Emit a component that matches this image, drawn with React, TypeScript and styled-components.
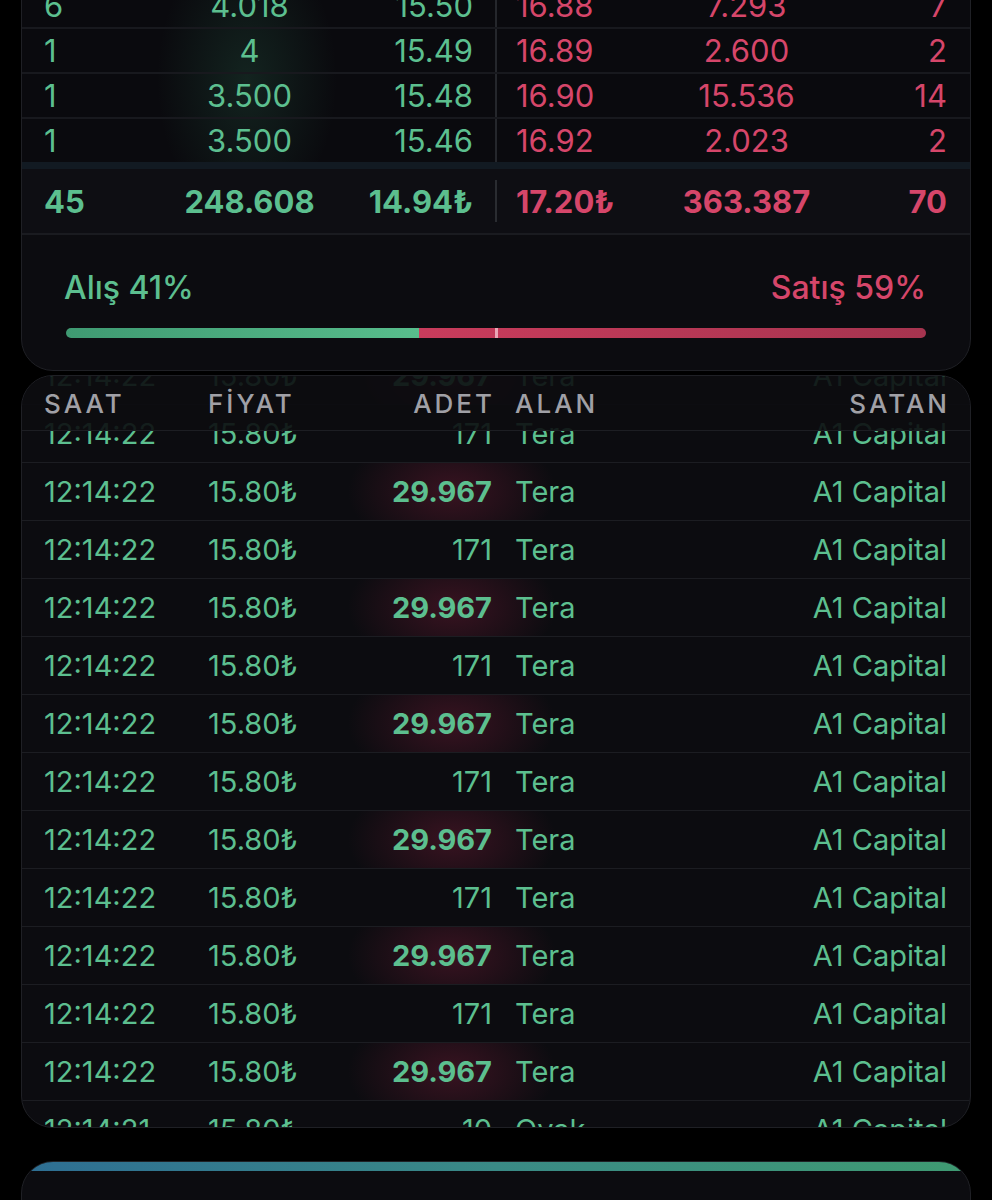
import React from 'react';
import styled, { createGlobalStyle } from 'styled-components';

const GREEN = '#5cbf8f';
const RED = '#d6466a';

const GlobalStyle = createGlobalStyle`
  html, body {
    margin: 0;
    padding: 0;
    background: #000;
  }
  body {
    font-family: 'Inter', 'Noto Sans', 'DejaVu Sans', sans-serif;
    -webkit-font-smoothing: antialiased;
  }
`;

interface BookLine {
  bidCount: string;
  bidQty: string;
  bidPrice: string;
  askPrice: string;
  askQty: string;
  askCount: string;
}

const bookLines: BookLine[] = [
  { bidCount: '6', bidQty: '4.018', bidPrice: '15.50', askPrice: '16.88', askQty: '7.293', askCount: '7' },
  { bidCount: '1', bidQty: '4', bidPrice: '15.49', askPrice: '16.89', askQty: '2.600', askCount: '2' },
  { bidCount: '1', bidQty: '3.500', bidPrice: '15.48', askPrice: '16.90', askQty: '15.536', askCount: '14' },
  { bidCount: '1', bidQty: '3.500', bidPrice: '15.46', askPrice: '16.92', askQty: '2.023', askCount: '2' },
];

interface Trade {
  time: string;
  price: string;
  qty: string;
  buyer: string;
  seller: string;
  big?: boolean;
}

const trades: Trade[] = [];
for (let i = 0; i < 13; i++) {
  const big = i % 2 === 0;
  trades.push({ time: '12:14:22', price: '15.80₺', qty: big ? '29.967' : '171', buyer: 'Tera', seller: 'A1 Capital', big });
}
trades.push({ time: '12:14:21', price: '15.80₺', qty: '10', buyer: 'Oyak', seller: 'A1 Capital' });

function App() {
  const buyPct = 41;

  return (
    <>
      <GlobalStyle />
      <Page>
        <BookCard>
          <BookBody>
            {bookLines.map((line, i) => (
              <BookRow key={i}>
                <BidSide>
                  <Cell $align="left">{line.bidCount}</Cell>
                  <Cell $align="center">{line.bidQty}</Cell>
                  <Cell $align="right">{line.bidPrice}</Cell>
                </BidSide>
                <Divider />
                <AskSide>
                  <Cell $align="left">{line.askPrice}</Cell>
                  <Cell $align="center">{line.askQty}</Cell>
                  <Cell $align="right">{line.askCount}</Cell>
                </AskSide>
              </BookRow>
            ))}
          </BookBody>
          <TotalsRow>
            <BidSide>
              <Cell $align="left" $bold>45</Cell>
              <Cell $align="center" $bold>248.608</Cell>
              <Cell $align="right" $bold>14.94₺</Cell>
            </BidSide>
            <ShortDivider />
            <AskSide>
              <Cell $align="left" $bold>17.20₺</Cell>
              <Cell $align="center" $bold>363.387</Cell>
              <Cell $align="right" $bold>70</Cell>
            </AskSide>
          </TotalsRow>
          <RatioBlock>
            <RatioLabels>
              <RatioLabel $color={GREEN}>Alış {buyPct}%</RatioLabel>
              <RatioLabel $color={RED}>Satış {100 - buyPct}%</RatioLabel>
            </RatioLabels>
            <RatioBar>
              <BuyPart style={{ width: `${buyPct}%` }} />
              <SellPart />
              <MidMarker />
            </RatioBar>
          </RatioBlock>
        </BookCard>

        <TradesCard>
          <TradesList>
            {trades.map((t, i) => (
              <TradeRow key={i} $big={t.big}>
                <TradeCell>{t.time}</TradeCell>
                <TradeCell>{t.price}</TradeCell>
                <TradeCell $right $bold={t.big}>{t.qty}</TradeCell>
                <TradeCell $pad>{t.buyer}</TradeCell>
                <TradeCell $right>{t.seller}</TradeCell>
              </TradeRow>
            ))}
          </TradesList>
          <TradesHeader>
            <HeadCell>SAAT</HeadCell>
            <HeadCell>FİYAT</HeadCell>
            <HeadCell $right>ADET</HeadCell>
            <HeadCell $pad>ALAN</HeadCell>
            <HeadCell $right>SATAN</HeadCell>
          </TradesHeader>
        </TradesCard>

        <NextCard>
          <GradientStrip />
        </NextCard>
      </Page>
    </>
  );
}

export default App;

const Page = styled.div`
  margin-top: -17px;
  padding: 0 21px;
  display: flex;
  flex-direction: column;
`;

const BookCard = styled.section`
  background: #0c0c10;
  border: 1px solid #1f2025;
  border-radius: 0 0 32px 32px;
  overflow: hidden;
`;

const BookBody = styled.div`
  background:
    radial-gradient(ellipse 120px 190px at 225px 95px, rgba(70, 180, 130, 0.15), transparent 75%),
    #0a0a0e;
`;

const BookRow = styled.div`
  height: 45px;
  box-sizing: border-box;
  border-bottom: 2px solid #18191e;
  display: grid;
  grid-template-columns: 1fr 2px 1fr;
  align-items: stretch;
  color: ${GREEN};
  &:last-child {
    border-bottom: 7px solid #121a22;
    height: 50px;
  }
`;

const BidSide = styled.div`
  display: grid;
  grid-template-columns: 110px 1fr 128px;
  align-items: center;
  padding: 0 22px 0 22px;
  color: ${GREEN};
`;

const AskSide = styled.div`
  display: grid;
  grid-template-columns: 135px 1fr 105px;
  align-items: center;
  padding: 0 23px 0 19px;
  color: ${RED};
`;

const Cell = styled.div<{ $align: 'left' | 'center' | 'right'; $bold?: boolean }>`
  text-align: ${({ $align }) => $align};
  font-size: 31px;
  font-weight: ${({ $bold }) => ($bold ? 700 : 400)};
  line-height: 1;
  white-space: nowrap;
`;

const Divider = styled.div`
  background: #25272c;
`;

const ShortDivider = styled.div`
  align-self: center;
  height: 42px;
  background: #2a2c31;
`;

const TotalsRow = styled.div`
  height: 66px;
  box-sizing: border-box;
  border-bottom: 2px solid #1a1b20;
  display: grid;
  grid-template-columns: 1fr 2px 1fr;
  align-items: center;
  background: #0e0e13;
`;

const RatioBlock = styled.div`
  padding: 37px 44px 32px 42px;
  display: flex;
  flex-direction: column;
  gap: 24px;
`;

const RatioLabels = styled.div`
  display: flex;
  justify-content: space-between;
  align-items: center;
`;

const RatioLabel = styled.span<{ $color: string }>`
  color: ${({ $color }) => $color};
  font-size: 32px;
  font-weight: 500;
  line-height: 1;
`;

const RatioBar = styled.div`
  position: relative;
  height: 10px;
  margin: 0 0 0 2px;
  border-radius: 5px;
  overflow: hidden;
  display: flex;
`;

const BuyPart = styled.div`
  height: 100%;
  background: linear-gradient(90deg, #3f9a72, #58bd8c);
`;

const SellPart = styled.div`
  flex: 1;
  height: 100%;
  background: linear-gradient(90deg, #c93c5c, #a6344f);
`;

const MidMarker = styled.div`
  position: absolute;
  left: calc(50% - 1px);
  top: 0;
  width: 3px;
  height: 100%;
  background: #eaa7b6;
`;

const TradesCard = styled.section`
  position: relative;
  margin-top: 4px;
  height: 753px;
  box-sizing: border-box;
  background: #0c0c10;
  border: 1px solid #1f2025;
  border-radius: 32px;
  overflow: hidden;
`;

const TradesList = styled.div`
  margin-top: -29px;
  display: flex;
  flex-direction: column;
`;

const TradeRow = styled.div<{ $big?: boolean }>`
  height: 58px;
  box-sizing: border-box;
  border-bottom: 1px solid #1c1d22;
  padding: 0 23px 0 22px;
  display: grid;
  grid-template-columns: 164px 150px 134px 1fr 1fr;
  align-items: center;
  background: ${({ $big }) =>
    $big
      ? 'radial-gradient(ellipse 130px 80px at 430px 50%, rgba(130, 30, 60, 0.38), transparent 80%)'
      : 'transparent'};
`;

const TradeCell = styled.div<{ $right?: boolean; $bold?: boolean; $pad?: boolean }>`
  color: ${GREEN};
  font-size: 29px;
  font-weight: ${({ $bold }) => ($bold ? 700 : 400)};
  line-height: 1;
  white-space: nowrap;
  text-align: ${({ $right }) => ($right ? 'right' : 'left')};
  padding-left: ${({ $pad }) => ($pad ? '23px' : '0')};
`;

const TradesHeader = styled.div`
  position: absolute;
  left: 0;
  right: 0;
  top: 0;
  height: 55px;
  box-sizing: border-box;
  padding: 0 23px 0 22px;
  display: grid;
  grid-template-columns: 164px 150px 134px 1fr 1fr;
  align-items: center;
  background: rgba(12, 12, 16, 0.9);
  border-bottom: 1px solid #1d1e23;
`;

const HeadCell = styled.div<{ $right?: boolean; $pad?: boolean }>`
  color: #a0a0a6;
  font-size: 26px;
  font-weight: 500;
  letter-spacing: 3px;
  line-height: 1;
  padding-top: 2px;
  text-align: ${({ $right }) => ($right ? 'right' : 'left')};
  padding-left: ${({ $pad }) => ($pad ? '23px' : '0')};
  margin-right: ${({ $right }) => ($right ? '-3px' : '0')};
`;

const NextCard = styled.section`
  margin-top: 33px;
  height: 120px;
  background: #0c0c10;
  border: 1px solid #1f2025;
  border-radius: 32px 32px 0 0;
  overflow: hidden;
`;

const GradientStrip = styled.div`
  height: 9px;
  background: linear-gradient(90deg, #2e6e93, #3a8a86 50%, #3f9a72);
`;
